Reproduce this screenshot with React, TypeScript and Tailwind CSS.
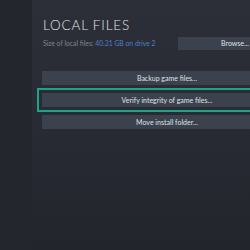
export default function App() {
  return (
    <div className="flex h-[250px] w-[250px] overflow-hidden bg-[#23262d] font-['Lato','Noto_Sans',sans-serif]">
      <div className="w-8 shrink-0 bg-[#24262e]" />
      <div className="min-w-0 flex-1 bg-gradient-to-b from-[#2c2f38] via-[#282b33] to-[#22252c] pl-[10px] pt-[18px]">
        <div className="w-[250px]">
          <h1 className="pl-[1px] text-[13.5px] font-light leading-[14px] tracking-[0.06em] text-[#e2e4e7]">
            LOCAL FILES
          </h1>
          <div className="mt-[5px] flex h-[13px] items-center justify-between">
            <p className="pl-[1px] text-[6.8px] text-[#7e858e]">
              Size of local files: <span className="text-[#4d7fcf]">40.31 GB on drive 2</span>
            </p>
            <button className="h-[13px] w-[114px] bg-[#3c414e] text-[7px] text-[#dfe3e9]">
              Browse...
            </button>
          </div>
          <div className="mt-[21px] flex flex-col gap-[8px]">
            <button className="h-[14px] bg-[#3c414e] text-[7px] text-[#dfe3e9]">
              Backup game files...
            </button>
            <button className="h-[14px] bg-[#3c414e] text-[7px] text-[#dfe3e9] outline-2 outline-offset-[3px] outline-[#1fa386]">
              Verify integrity of game files...
            </button>
            <button className="h-[14px] bg-[#3c414e] text-[7px] text-[#dfe3e9]">
              Move install folder...
            </button>
          </div>
        </div>
      </div>
    </div>
  );
}
